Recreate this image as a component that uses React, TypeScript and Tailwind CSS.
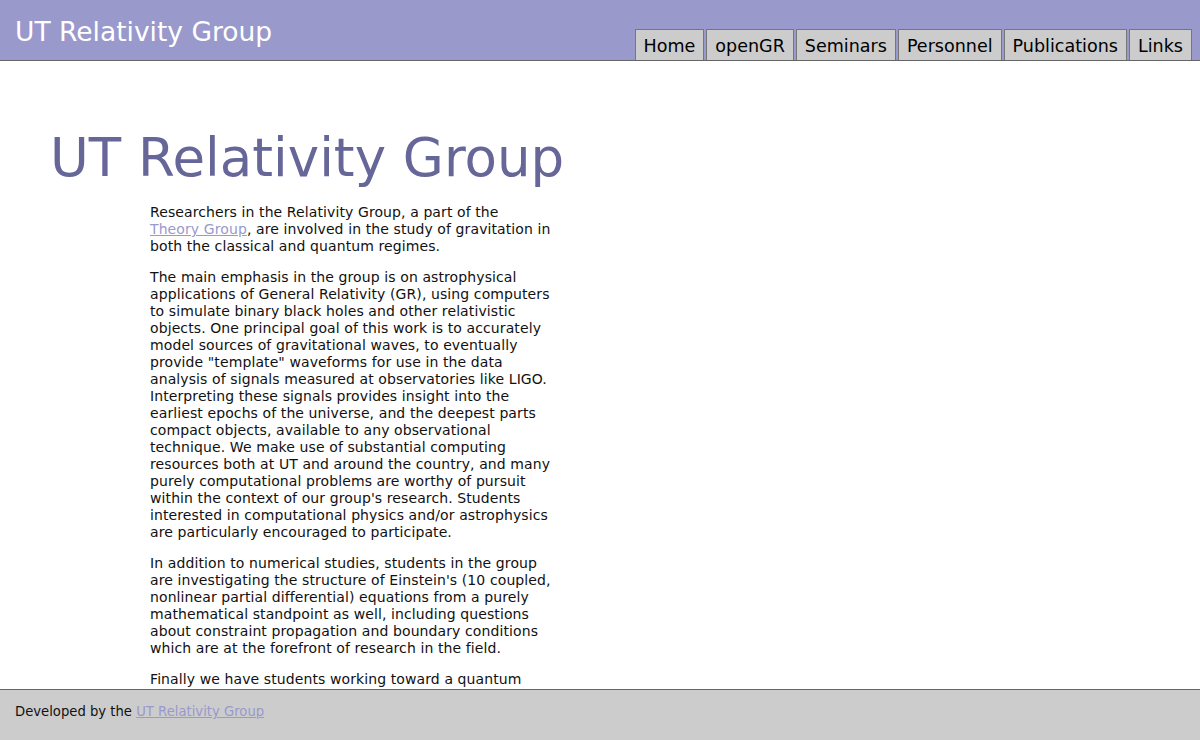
import React from 'react';

const tabs = ['Home', 'openGR', 'Seminars', 'Personnel', 'Publications', 'Links'];

const theoryLink = (
    <a href="#" className="text-[#9999cc] underline">
        Theory Group
    </a>
);

// lines are kept as in the original page so wrapping matches
const paragraphs: React.ReactNode[][] = [
    [
        'Researchers in the Relativity Group, a part of the',
        <>{theoryLink}, are involved in the study of gravitation in</>,
        'both the classical and quantum regimes.',
    ],
    [
        'The main emphasis in the group is on astrophysical',
        'applications of General Relativity (GR), using computers',
        'to simulate binary black holes and other relativistic',
        'objects. One principal goal of this work is to accurately',
        'model sources of gravitational waves, to eventually',
        'provide "template" waveforms for use in the data',
        'analysis of signals measured at observatories like LIGO.',
        'Interpreting these signals provides insight into the',
        'earliest epochs of the universe, and the deepest parts',
        'compact objects, available to any observational',
        'technique. We make use of substantial computing',
        'resources both at UT and around the country, and many',
        'purely computational problems are worthy of pursuit',
        "within the context of our group's research. Students",
        'interested in computational physics and/or astrophysics',
        'are particularly encouraged to participate.',
    ],
    [
        'In addition to numerical studies, students in the group',
        "are investigating the structure of Einstein's (10 coupled,",
        'nonlinear partial differential) equations from a purely',
        'mathematical standpoint as well, including questions',
        'about constraint propagation and boundary conditions',
        'which are at the forefront of research in the field.',
    ],
    [
        'Finally we have students working toward a quantum',
        'theory of gravity, studying the canonical approach and',
        'related ideas, with the hope of understanding how',
        'spacetime itself behaves at the smallest scales.',
    ],
];

export default function App() {
    return (
        <div className="h-[740px] overflow-hidden bg-white font-['DejaVu_Sans',Verdana,sans-serif] text-[#111]">
            {/* Header */}
            <div className="flex h-[61px] items-end justify-between border-b border-[#666] bg-[#9999cc]">
                <div className="self-start pl-[15px] pt-[14px] text-[26.5px] leading-[36px] text-white">
                    UT Relativity Group
                </div>
                <div className="mr-[8px] flex gap-[2px]">
                    {tabs.map((tab) => (
                        <a
                            key={tab}
                            href="#"
                            className="border border-b-0 border-[#777] bg-[#cccccc] px-[8px] pt-[3px] pb-[1px] text-[17.55px] leading-[26px] text-black"
                        >
                            {tab}
                        </a>
                    ))}
                </div>
            </div>

            {/* Main */}
            <div className="pl-[50px] pt-[62px]">
                <h1 className="text-[53px] leading-[70px] text-[#666699]">UT Relativity Group</h1>
                <div className="ml-[100px] mt-[11px] w-[420px] text-[14px] leading-[17px] tracking-[0.1px]">
                    {paragraphs.map((lines, i) => (
                        <p key={i} className="mb-[14px]">
                            {lines.map((line, j) => (
                                <span key={j} className="block whitespace-nowrap">
                                    {line}
                                </span>
                            ))}
                        </p>
                    ))}
                </div>
            </div>

            {/* Footer */}
            <div className="fixed bottom-0 left-0 right-0 h-[51px] border-t border-[#666] bg-[#cccccc] pl-[15px] pt-[13px] text-[13.2px] leading-[17px]">
                Developed by the <a href="#" className="text-[#9999cc] underline">UT Relativity Group</a>
            </div>
        </div>
    );
}
